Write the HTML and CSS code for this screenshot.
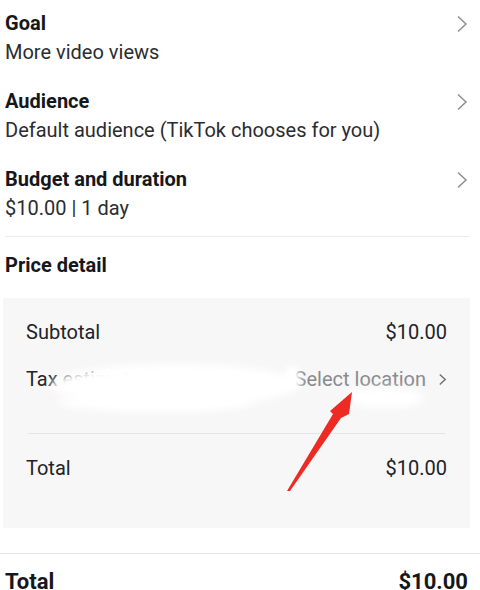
FILE: index.html
```html
<!DOCTYPE html>
<html lang="en">
<head>
<meta charset="utf-8">
<title>Promote</title>
<link rel="stylesheet" href="styles.css">
</head>
<body>
<div class="page">
  <div class="setting">
    <div class="setting-text">
      <div class="setting-title">Goal</div>
      <div class="setting-value">More video views</div>
    </div>
    <svg class="chev" viewBox="0 0 12 18"><path d="M2 1.5 L10 9 L2 16.5"/></svg>
  </div>
  <div class="setting">
    <div class="setting-text">
      <div class="setting-title">Audience</div>
      <div class="setting-value">Default audience (TikTok chooses for you)</div>
    </div>
    <svg class="chev" viewBox="0 0 12 18"><path d="M2 1.5 L10 9 L2 16.5"/></svg>
  </div>
  <div class="setting">
    <div class="setting-text">
      <div class="setting-title">Budget and duration</div>
      <div class="setting-value">$10.00 | 1 day</div>
    </div>
    <svg class="chev" viewBox="0 0 12 18"><path d="M2 1.5 L10 9 L2 16.5"/></svg>
  </div>

  <div class="divider"></div>

  <div class="section-title">Price detail</div>

  <div class="price-box">
    <div class="price-row">
      <span>Subtotal</span>
      <span>$10.00</span>
    </div>
    <div class="price-row tax-row">
      <span>Tax estimate</span>
      <span class="select-loc">Select location
        <svg class="chev-small" viewBox="0 0 10 14"><path d="M2 1.5 L8 7 L2 12.5"/></svg>
      </span>
    </div>
    <div class="inner-divider"></div>
    <div class="price-row">
      <span>Total</span>
      <span>$10.00</span>
    </div>
  </div>

  <div class="full-divider"></div>

  <div class="grand-total">
    <span>Total</span>
    <span>$10.00</span>
  </div>
</div>

<div class="smudge smudge-a"></div>
<div class="smudge smudge-b"></div>
<div class="smudge smudge-c"></div>
<div class="smudge smudge-d"></div>

<svg class="annotation" viewBox="0 0 480 590" width="480" height="590">
  <polygon points="287,491 333,414 330,411 352,392 349,414 341,418 290,491" fill="#ee2a24"/>
</svg>
</body>
</html>
```

FILE: styles.css
```css
html, body {
  margin: 0;
  padding: 0;
  background: #ffffff;
}

body {
  font-family: Roboto, "Noto Sans", "Liberation Sans", sans-serif;
  color: #1e1f24;
  width: 480px;
  height: 590px;
  overflow: hidden;
  position: relative;
}

.page {
  display: flex;
  flex-direction: column;
}

.setting {
  display: flex;
  align-items: flex-start;
  justify-content: space-between;
  padding: 9px 12px 11px 5px;
  height: 58px;
}

.setting-title {
  font-size: 20px;
  font-weight: 700;
  line-height: 28px;
  color: #16171c;
}

.setting-value {
  font-size: 20px;
  line-height: 30px;
  color: #2b2c31;
}

.chev {
  width: 12px;
  height: 18px;
  margin-top: 6px;
  fill: none;
  stroke: #8d8e92;
  stroke-width: 1.5;
}

.divider {
  height: 1px;
  background: #ececec;
  margin: 2px 10px 0 5px;
}

.section-title {
  font-size: 20px;
  font-weight: 700;
  line-height: 28px;
  color: #16171c;
  padding: 14px 0 0 5px;
}

.price-box {
  margin: 19px 10px 0 3px;
  background: #f7f7f7;
  padding: 19px 23px 45px 23px;
  display: flex;
  flex-direction: column;
}

.price-row {
  display: flex;
  justify-content: space-between;
  align-items: center;
  font-size: 20px;
  line-height: 30px;
  color: #222328;
}

.tax-row {
  margin-top: 17px;
}

.select-loc {
  color: #8a8b90;
  display: flex;
  align-items: center;
  gap: 12px;
}

.chev-small {
  width: 9px;
  height: 13px;
  fill: none;
  stroke: #6f7075;
  stroke-width: 1.6;
}

.inner-divider {
  height: 1px;
  background: #e5e5e5;
  margin: 39px 2px 0 2px;
}

.inner-divider + .price-row {
  margin-top: 19px;
}

.full-divider {
  height: 1px;
  background: #e6e6e6;
  margin-top: 25px;
}

.grand-total {
  display: flex;
  justify-content: space-between;
  padding: 13px 12px 0 5px;
  font-size: 22px;
  font-weight: 700;
  line-height: 30px;
  color: #16171c;
}

.smudge {
  position: absolute;
  background: #ffffff;
  border-radius: 50%;
  filter: blur(4px);
}

.smudge-a {
  left: 50px;
  top: 364px;
  width: 250px;
  height: 42px;
}

.smudge-b {
  left: 56px;
  top: 392px;
  width: 200px;
  height: 20px;
}

.smudge-c {
  left: 345px;
  top: 388px;
  width: 80px;
  height: 20px;
}

.smudge-d {
  left: 284px;
  top: 366px;
  width: 16px;
  height: 24px;
  filter: blur(3px);
}

.annotation {
  position: absolute;
  left: 0;
  top: 0;
  pointer-events: none;
}
```
